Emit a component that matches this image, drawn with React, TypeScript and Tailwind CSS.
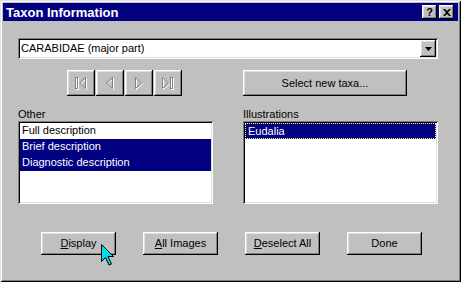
import type { ReactNode } from 'react';

const raised =
  'bg-[#c0c0c0] shadow-[inset_-1px_-1px_0_#000,inset_1px_1px_0_#fff,inset_-2px_-2px_0_#808080,inset_2px_2px_0_#dfdfdf]';
const sunken =
  'bg-white shadow-[inset_1px_1px_0_#808080,inset_-1px_-1px_0_#fff,inset_2px_2px_0_#000,inset_-2px_-2px_0_#dfdfdf]';

const Button = ({ children, className = '' }: { children: ReactNode; className?: string }) => (
  <div className={`${raised} flex items-center justify-center text-black ${className}`}>{children}</div>
);

type NavKind = 'first' | 'prev' | 'next' | 'last';

const NavShapes = ({ kind }: { kind: NavKind }) => {
  switch (kind) {
    case 'first':
      return (
        <>
          <rect x="1.5" y="1.5" width="2" height="11" />
          <polygon points="11.5,1.5 5.5,7 11.5,12.5" />
        </>
      );
    case 'prev':
      return <polygon points="9.5,1.5 3.5,7 9.5,12.5" />;
    case 'next':
      return <polygon points="3.5,1.5 9.5,7 3.5,12.5" />;
    default:
      return (
        <>
          <polygon points="1.5,1.5 7.5,7 1.5,12.5" />
          <rect x="9.5" y="1.5" width="2" height="11" />
        </>
      );
  }
};

const NavButton = ({ kind }: { kind: NavKind }) => (
  <Button className="h-[26px] w-[28px]">
    <svg width="14" height="15" viewBox="0 0 14 15" fill="none" strokeWidth="1">
      <g stroke="#fff" transform="translate(1,1)">
        <NavShapes kind={kind} />
      </g>
      <g stroke="#808080">
        <NavShapes kind={kind} />
      </g>
    </svg>
  </Button>
);

const Item = ({ label, selected, focus }: { label: string; selected?: boolean; focus?: boolean }) => (
  <div
    className={`h-[16px] pl-[2px] leading-[15px] whitespace-nowrap ${
      selected ? 'bg-[#000080] text-white' : 'text-black'
    } ${focus ? 'border border-dotted border-[#ffff80] pl-[1px] leading-[13px]' : ''}`}
  >
    {label}
  </div>
);

const App = () => {
  return (
    <div
      className="relative h-[282px] w-[461px] overflow-hidden bg-[#c0c0c0] text-[11px] shadow-[inset_1px_1px_0_#dfdfdf,inset_-1px_-1px_0_#000,inset_2px_2px_0_#fff,inset_-2px_-2px_0_#808080]"
      style={{ fontFamily: '"Liberation Sans", Arial, sans-serif' }}
    >
      {/* Title bar */}
      <div className="mx-[3px] mt-[3px] flex h-[18px] items-center bg-[#000080] pl-[3px] pr-[4px]">
        <span className="flex-1 text-[13px] font-bold leading-none text-white">Taxon Information</span>
        <div className="flex gap-[2px]">
          <Button className="h-[14px] w-[15px] text-[11px] font-bold leading-none">?</Button>
          <Button className="h-[14px] w-[15px]">
            <svg width="8" height="7" viewBox="0 0 8 7">
              <path d="M0 0h2l2 2 2-2h2L5 3.5 8 7H6L4 5 2 7H0l3-3.5z" fill="#000" />
            </svg>
          </Button>
        </div>
      </div>

      <div className="pl-[18px] pr-[23px]">
        {/* Taxon combo */}
        <div className={`${sunken} mt-[17px] flex h-[21px] items-center`}>
          <span className="flex-1 pl-[3px] text-black">CARABIDAE (major part)</span>
          <Button className="mr-[2px] h-[17px] w-[16px]">
            <svg width="7" height="4" viewBox="0 0 7 4">
              <path d="M0 0h7L3.5 4z" fill="#000" />
            </svg>
          </Button>
        </div>

        <div className="mt-[11px] grid grid-cols-[195px_195px] gap-x-[30px]">
          <div className="flex h-[26px] gap-[1px] pl-[49px]">
            <NavButton kind="first" />
            <NavButton kind="prev" />
            <NavButton kind="next" />
            <NavButton kind="last" />
          </div>
          <Button className="h-[26px] w-[164px]">Select new taxa...</Button>

          <div className="mt-[11px] h-[14px] leading-[14px] text-black">Other</div>
          <div className="mt-[11px] h-[14px] leading-[14px] text-black">Illustrations</div>

          <div className={`${sunken} h-[83px] p-[2px]`}>
            <Item label="Full description" />
            <Item label="Brief description" selected />
            <Item label="Diagnostic description" selected />
          </div>
          <div className={`${sunken} h-[83px] p-[2px]`}>
            <Item label="Eudalia" selected focus />
          </div>
        </div>

        {/* Action buttons */}
        <div className="mt-[28px] flex gap-[27px] pl-[23px]">
          <Button className="h-[23px] w-[75px]">
            <span>
              <u>D</u>isplay
            </span>
          </Button>
          <Button className="h-[23px] w-[75px]">
            <span>
              <u>A</u>ll Images
            </span>
          </Button>
          <Button className="h-[23px] w-[75px]">
            <span>
              <u>D</u>eselect All
            </span>
          </Button>
          <Button className="h-[23px] w-[75px]">Done</Button>
        </div>
      </div>

      {/* Mouse pointer */}
      <svg className="absolute left-[101px] top-[244px]" width="14" height="22" viewBox="0 0 14 22">
        <path
          d="M0.5 0.5V17.5L4.5 13.5L8 21L10.5 20L7 12.5H12.5Z"
          fill="#00e0e8"
          stroke="#000"
          strokeWidth="1"
          strokeLinejoin="miter"
        />
      </svg>
    </div>
  );
};

export default App;
